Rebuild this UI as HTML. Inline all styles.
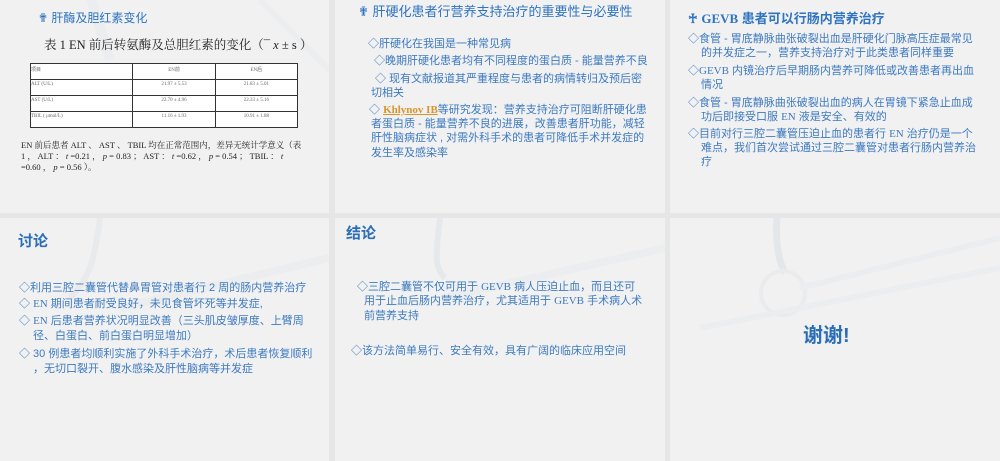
<!DOCTYPE html>
<html><head><meta charset="utf-8"><style>
*{margin:0;padding:0;box-sizing:border-box}
body{width:1000px;height:461px;background:#e6e6e6;position:relative;overflow:hidden;font-family:"Liberation Sans","Noto Sans CJK SC",sans-serif;color:#3d7abf}
.s{position:absolute;background:#f1f1f2;overflow:hidden}
.s svg.bg{position:absolute;left:0;top:0}
.t{position:absolute;white-space:nowrap;font-size:11px;line-height:14px}
.serif{font-family:"Liberation Serif","Noto Serif CJK SC",serif}
table{position:absolute;left:30px;top:63px;width:268px;border-collapse:collapse;font-family:"Liberation Serif",serif;font-size:5px;color:#666}
td{border:1px solid #333;height:16px;vertical-align:top;text-align:center;padding-top:2px;background:#fff}
td:first-child{text-align:left}
</style></head><body>
<!-- slide 1 -->
<div class="s" style="left:0;top:0;width:329px;height:213px">
<svg class="bg" width="329" height="213"><path d="M90 -5 L110 60" stroke="#ebedef" stroke-width="10" fill="none"/><path d="M260 0 C300 40 320 60 329 70" stroke="#ecedef" stroke-width="6" fill="none"/></svg>
<div class="t" style="left:38px;top:11px;font-size:12px;color:#2f74c0">✟ 肝酶及胆红素变化</div>
<div class="t serif" style="left:44px;top:38px;font-size:12.5px;color:#222">表 1 EN 前后转氨酶及总胆红素的变化（¯ <i>x</i> ± s ）</div>
<table><tr><td style="height:12px">项目</td><td>EN前</td><td>EN后</td></tr>
<tr><td>ALT (U/L)</td><td>21.97 ± 5.53</td><td>21.83 ± 5.01</td></tr>
<tr><td>AST (U/L)</td><td>22.70 ± 4.96</td><td>22.33 ± 5.16</td></tr>
<tr><td>TBIL ( μmol/L)</td><td>11.16 ± 1.93</td><td>10.91 ± 1.88</td></tr></table>
<div class="t serif" style="left:21px;top:140px;font-size:8.5px;line-height:11px;color:#222">EN 前后患者 ALT 、 AST 、 TBIL 均在正常范围内，差异无统计学意义（表</div>
<div class="t serif" style="left:21px;top:151px;font-size:8.5px;line-height:11px;color:#222">1 ， ALT ： <i>t</i> =0.21 ， <i>p</i> = 0.83 ； AST ： <i>t</i> =0.62 ， <i>p</i> = 0.54 ； TBIL ： <i>t</i></div>
<div class="t serif" style="left:21px;top:162px;font-size:8.5px;line-height:11px;color:#222">=0.60 ， <i>p</i> = 0.56 ）。</div>
</div>
<!-- slide 2 -->
<div class="s" style="left:335px;top:0;width:330px;height:213px">
<div class="t" style="left:23px;top:4px;font-size:13px;line-height:16px;color:#2f74c0">✟ 肝硬化患者行营养支持治疗的重要性与必要性</div>
<div class="t" style="left:33px;top:37px">◇肝硬化在我国是一种常见病</div>
<div class="t" style="left:39px;top:54px">◇晚期肝硬化患者均有不同程度的蛋白质 - 能量营养不良</div>
<div class="t" style="left:40px;top:72px">◇ 现有文献报道其严重程度与患者的病情转归及预后密</div>
<div class="t" style="left:36px;top:86px">切相关</div>
<div class="t" style="left:34px;top:103px">◇ <b class="serif" style="color:#d9942a;text-decoration:underline">Khlynov IB</b>等研究发现：营养支持治疗可阻断肝硬化患</div>
<div class="t" style="left:36px;top:117px">者蛋白质 - 能量营养不良的进展，改善患者肝功能，减轻</div>
<div class="t" style="left:36px;top:131px">肝性脑病症状 , 对需外科手术的患者可降低手术并发症的</div>
<div class="t" style="left:36px;top:146px">发生率及感染率</div>
</div>
<!-- slide 3 -->
<div class="s" style="left:670px;top:0;width:330px;height:213px">
<div class="t" style="left:18px;top:12px;font-size:13px;font-weight:bold;color:#2f74c0">♰ <span class="serif">GEVB</span> 患者可以行肠内营养治疗</div>
<div class="t" style="left:18px;top:32px">◇食管 - 胃底静脉曲张破裂出血是肝硬化门脉高压症最常见</div>
<div class="t" style="left:31px;top:46px">的并发症之一，营养支持治疗对于此类患者同样重要</div>
<div class="t" style="left:18px;top:64px">◇<span class="serif">GEVB</span> 内镜治疗后早期肠内营养可降低或改善患者再出血</div>
<div class="t" style="left:31px;top:78px">情况</div>
<div class="t" style="left:18px;top:96px">◇食管 - 胃底静脉曲张破裂出血的病人在胃镜下紧急止血成</div>
<div class="t" style="left:31px;top:110px">功后即接受口服 <span class="serif">EN</span> 液是安全、有效的</div>
<div class="t" style="left:18px;top:127px">◇目前对行三腔二囊管压迫止血的患者行 <span class="serif">EN</span> 治疗仍是一个</div>
<div class="t" style="left:31px;top:141px">难点，我们首次尝试通过三腔二囊管对患者行肠内营养治</div>
<div class="t" style="left:31px;top:155px">疗</div>
</div>
<!-- slide 4 -->
<div class="s" style="left:0;top:218px;width:329px;height:243px">
<svg class="bg" width="329" height="243"><path d="M100 0 C95 40 90 60 70 80" stroke="#e8eaec" stroke-width="6" fill="none"/><path d="M120 90 L329 40" stroke="#ebedee" stroke-width="8" fill="none"/></svg>
<div class="t" style="left:18px;top:15px;font-size:15px;line-height:18px;font-weight:bold;color:#2a6db8">讨论</div>
<div class="t" style="left:19px;top:63px">◇利用三腔二囊管代替鼻胃管对患者行 2 周的肠内营养治疗</div>
<div class="t" style="left:19px;top:79px">◇ <span class="serif">EN</span> 期间患者耐受良好，未见食管坏死等并发症,</div>
<div class="t" style="left:19px;top:96px">◇ <span class="serif">EN</span> 后患者营养状况明显改善（三头肌皮皱厚度、上臂周</div>
<div class="t" style="left:33px;top:111px">径、白蛋白、前白蛋白明显增加）</div>
<div class="t" style="left:19px;top:129px">◇ 30 例患者均顺利实施了外科手术治疗，术后患者恢复顺利</div>
<div class="t" style="left:33px;top:144px">，无切口裂开、腹水感染及肝性脑病等并发症</div>
</div>
<!-- slide 5 -->
<div class="s" style="left:335px;top:218px;width:330px;height:243px">
<svg class="bg" width="330" height="243"><path d="M105 0 C100 40 100 50 110 60" stroke="#e6e9eb" stroke-width="6" fill="none"/><path d="M110 80 L330 30" stroke="#ebedee" stroke-width="8" fill="none"/></svg>
<div class="t" style="left:11px;top:7px;font-size:15px;line-height:18px;font-weight:bold;color:#2a6db8">结论</div>
<div class="t" style="left:22px;top:62px">◇三腔二囊管不仅可用于 <span class="serif">GEVB</span> 病人压迫止血，而且还可</div>
<div class="t" style="left:29px;top:76px">用于止血后肠内营养治疗，尤其适用于 <span class="serif">GEVB</span> 手术病人术</div>
<div class="t" style="left:29px;top:91px">前营养支持</div>
<div class="t" style="left:16px;top:126px">◇该方法简单易行、安全有效，具有广阔的临床应用空间</div>
</div>
<!-- slide 6 -->
<div class="s" style="left:670px;top:218px;width:330px;height:243px">
<svg class="bg" width="330" height="243"><path d="M107 0 C105 30 110 45 115 55" stroke="#e4e7ea" stroke-width="7" fill="none"/><circle cx="113" cy="75" r="22" fill="none" stroke="#e9ebed" stroke-width="4"/><path d="M130 70 L330 20 M30 110 L330 50" stroke="#ebedef" stroke-width="6" fill="none"/></svg>
<div class="t" style="left:133px;top:106px;font-size:20px;line-height:24px;font-weight:bold;color:#2a6db8">谢谢!</div>
</div>
</body></html>
